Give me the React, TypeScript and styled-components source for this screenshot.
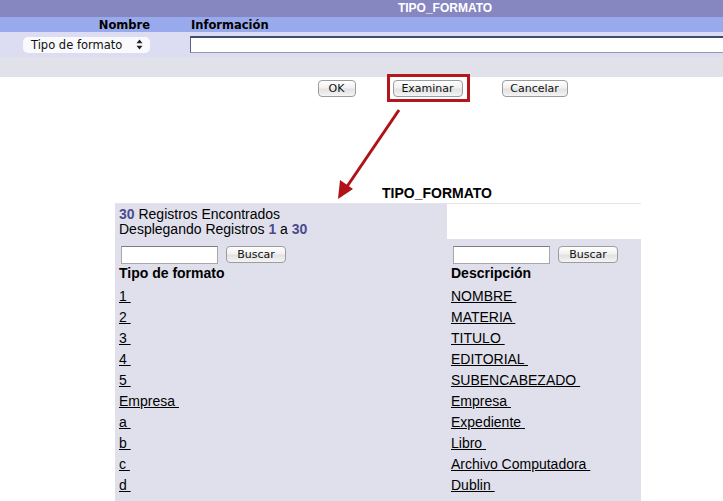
import React from "react";
import styled, { createGlobalStyle } from "styled-components";

const GlobalStyle = createGlobalStyle`
  html, body { margin: 0; padding: 0; background: #ffffff; }
  body { font-family: "Liberation Sans", Arial, sans-serif; color: #000; overflow: hidden; }
`;

const Page = styled.div`
  position: relative;
  width: 723px;
  height: 501px;
  overflow: hidden;
`;

const FormTable = styled.div`
  width: 890px;
`;

const TitleBar = styled.div`
  height: 17px;
  line-height: 17px;
  background: #8686c0;
  color: #ffffff;
  font-weight: bold;
  font-size: 12px;
  text-align: center;
`;

const Row = styled.div<{ $bg: string; $h: number }>`
  display: grid;
  grid-template-columns: 188px 1fr;
  align-items: center;
  height: ${(p) => p.$h}px;
  background: ${(p) => p.$bg};
`;

const HeadLabel = styled.div<{ $align: "right" | "left" }>`
  font-family: "DejaVu Sans", "Liberation Sans", sans-serif;
  font-weight: bold;
  font-size: 11.5px;
  text-align: ${(p) => p.$align};
  padding-right: ${(p) => (p.$align === "right" ? "38px" : "0")};
  padding-left: ${(p) => (p.$align === "left" ? "3px" : "0")};
`;

const SelectCell = styled.div`
  display: flex;
  justify-content: flex-end;
  padding-right: 38px;
`;

const FakeSelect = styled.div`
  width: 127px;
  height: 16px;
  box-sizing: border-box;
  background: #fafafc;
  border-radius: 5px;
  display: flex;
  align-items: center;
  justify-content: space-between;
  padding: 0 6px 0 8px;
  font-family: "DejaVu Sans", "Liberation Sans", sans-serif;
  font-size: 11.5px;
  color: #111;
`;

const InfoCell = styled.div`
  padding-left: 2px;
  display: flex;
`;

const WideInput = styled.input`
  flex: 1;
  height: 17px;
  box-sizing: border-box;
  border: 1px solid #9a9aa8;
  border-top: 2px solid #3e4a70;
  border-left: 1px solid #5a6080;
  background: #fff;
  padding: 0 2px;
  margin: 0;
`;

const ButtonBar = styled.div`
  display: flex;
  justify-content: center;
  align-items: center;
  gap: 37px;
  padding: 3px 5px 0 0;
`;

const MacButton = styled.button<{ $w: number; $ml?: number }>`
  width: ${(p) => p.$w}px;
  height: 17px;
  box-sizing: border-box;
  padding: 0;
  margin: 0 0 0 ${(p) => p.$ml ?? 0}px;
  border: 1px solid #9c9c9c;
  border-radius: 4px;
  background: linear-gradient(#ffffff 0%, #f1f1f1 45%, #e2e2e2 55%, #f4f4f4 100%);
  font-family: "DejaVu Sans", "Liberation Sans", sans-serif;
  font-size: 11px;
  line-height: 15px;
  color: #111;
`;

const Highlight = styled.span`
  display: inline-flex;
  border: 3px solid #b4161e;
  padding: 3px 4px 2px 3px;
  margin: -6px -7px -5px -6px;
`;

const Results = styled.div`
  margin-left: 115px;
  width: 526px;
  padding-top: 88px;
`;

const ResultsTitle = styled.div`
  font-weight: bold;
  font-size: 14px;
  line-height: 16px;
  padding-left: 267px;
  padding-bottom: 2px;
`;

const Grid = styled.div`
  display: grid;
  grid-template-columns: 332px 194px;
  background: #e0e0ec;
  border-top: 1px solid #e4e4ea;
  font-size: 14px;
  padding-bottom: 12px;
`;

const CountCell = styled.div`
  padding: 3px 4px 1px;
  line-height: 15px;
  height: 31px;
`;

const BlankCell = styled.div`
  background: #ffffff;
`;

const Num = styled.b`
  color: #4b4b8c;
`;

const FilterCell = styled.div`
  display: flex;
  align-items: flex-start;
  gap: 8px;
  padding: 7px 0 1px 6px;
`;

const SmallInput = styled.input`
  width: 97px;
  height: 18px;
  box-sizing: border-box;
  margin: 0;
  padding: 0 2px;
  border: 1px solid #a8a8a8;
  border-top-color: #7c7c7c;
  background: #fff;
`;

const ColHead = styled.div`
  font-weight: bold;
  line-height: 16px;
  padding: 0 4px 5px;
`;

const DataCell = styled.div`
  line-height: 21px;
  padding: 0 4px;
`;

const RowLink = styled.a`
  color: #000;
  text-decoration: underline;
  white-space: pre;
`;

const ArrowLayer = styled.svg`
  position: absolute;
  left: 0;
  top: 0;
  pointer-events: none;
`;

const Arrows = () => (
  <svg width="9" height="11" viewBox="0 0 9 11">
    <path d="M4.5 0.5 L7.5 4.2 L1.5 4.2 Z" fill="#222" />
    <path d="M4.5 10.5 L7.5 6.8 L1.5 6.8 Z" fill="#222" />
  </svg>
);

const rows: [string, string][] = [
  ["1", "NOMBRE"],
  ["2", "MATERIA"],
  ["3", "TITULO"],
  ["4", "EDITORIAL"],
  ["5", "SUBENCABEZADO"],
  ["Empresa", "Empresa"],
  ["a", "Expediente"],
  ["b", "Libro"],
  ["c", "Archivo Computadora"],
  ["d", "Dublin"],
];

export default function App() {
  return (
    <Page>
      <GlobalStyle />
      <FormTable>
        <TitleBar>TIPO_FORMATO</TitleBar>
        <Row $bg="#99aaec" $h={15}>
          <HeadLabel $align="right">Nombre</HeadLabel>
          <HeadLabel $align="left">Información</HeadLabel>
        </Row>
        <Row $bg="#dcdcf2" $h={25}>
          <SelectCell>
            <FakeSelect>
              <span>Tipo de formato</span>
              <Arrows />
            </FakeSelect>
          </SelectCell>
          <InfoCell>
            <WideInput type="text" />
          </InfoCell>
        </Row>
        <Row $bg="#e1e1ea" $h={20} />
        <ButtonBar>
          <MacButton $w={38}>OK</MacButton>
          <Highlight>
            <MacButton $w={70}>Examinar</MacButton>
          </Highlight>
          <MacButton $w={66} $ml={2}>Cancelar</MacButton>
        </ButtonBar>
      </FormTable>

      <Results>
        <ResultsTitle>TIPO_FORMATO</ResultsTitle>
        <Grid>
          <CountCell>
            <Num>30</Num> Registros Encontrados
            <br />
            Desplegando Registros <Num>1</Num> a <Num>30</Num>
          </CountCell>
          <BlankCell />
          <FilterCell>
            <SmallInput type="text" />
            <MacButton $w={60}>Buscar</MacButton>
          </FilterCell>
          <FilterCell>
            <SmallInput type="text" />
            <MacButton $w={60}>Buscar</MacButton>
          </FilterCell>
          <ColHead>Tipo de formato</ColHead>
          <ColHead>Descripción</ColHead>
          {rows.map(([a, b]) => (
            <React.Fragment key={a}>
              <DataCell>
                <RowLink href="#">{a + " "}</RowLink>
              </DataCell>
              <DataCell>
                <RowLink href="#">{b + " "}</RowLink>
              </DataCell>
            </React.Fragment>
          ))}
        </Grid>
      </Results>

      <ArrowLayer width="723" height="501" viewBox="0 0 723 501">
        <line x1="399" y1="110" x2="346" y2="188" stroke="#b01218" strokeWidth="3" />
        <path d="M338 199 L340 180 L353 189 Z" fill="#b01218" />
      </ArrowLayer>
    </Page>
  );
}
